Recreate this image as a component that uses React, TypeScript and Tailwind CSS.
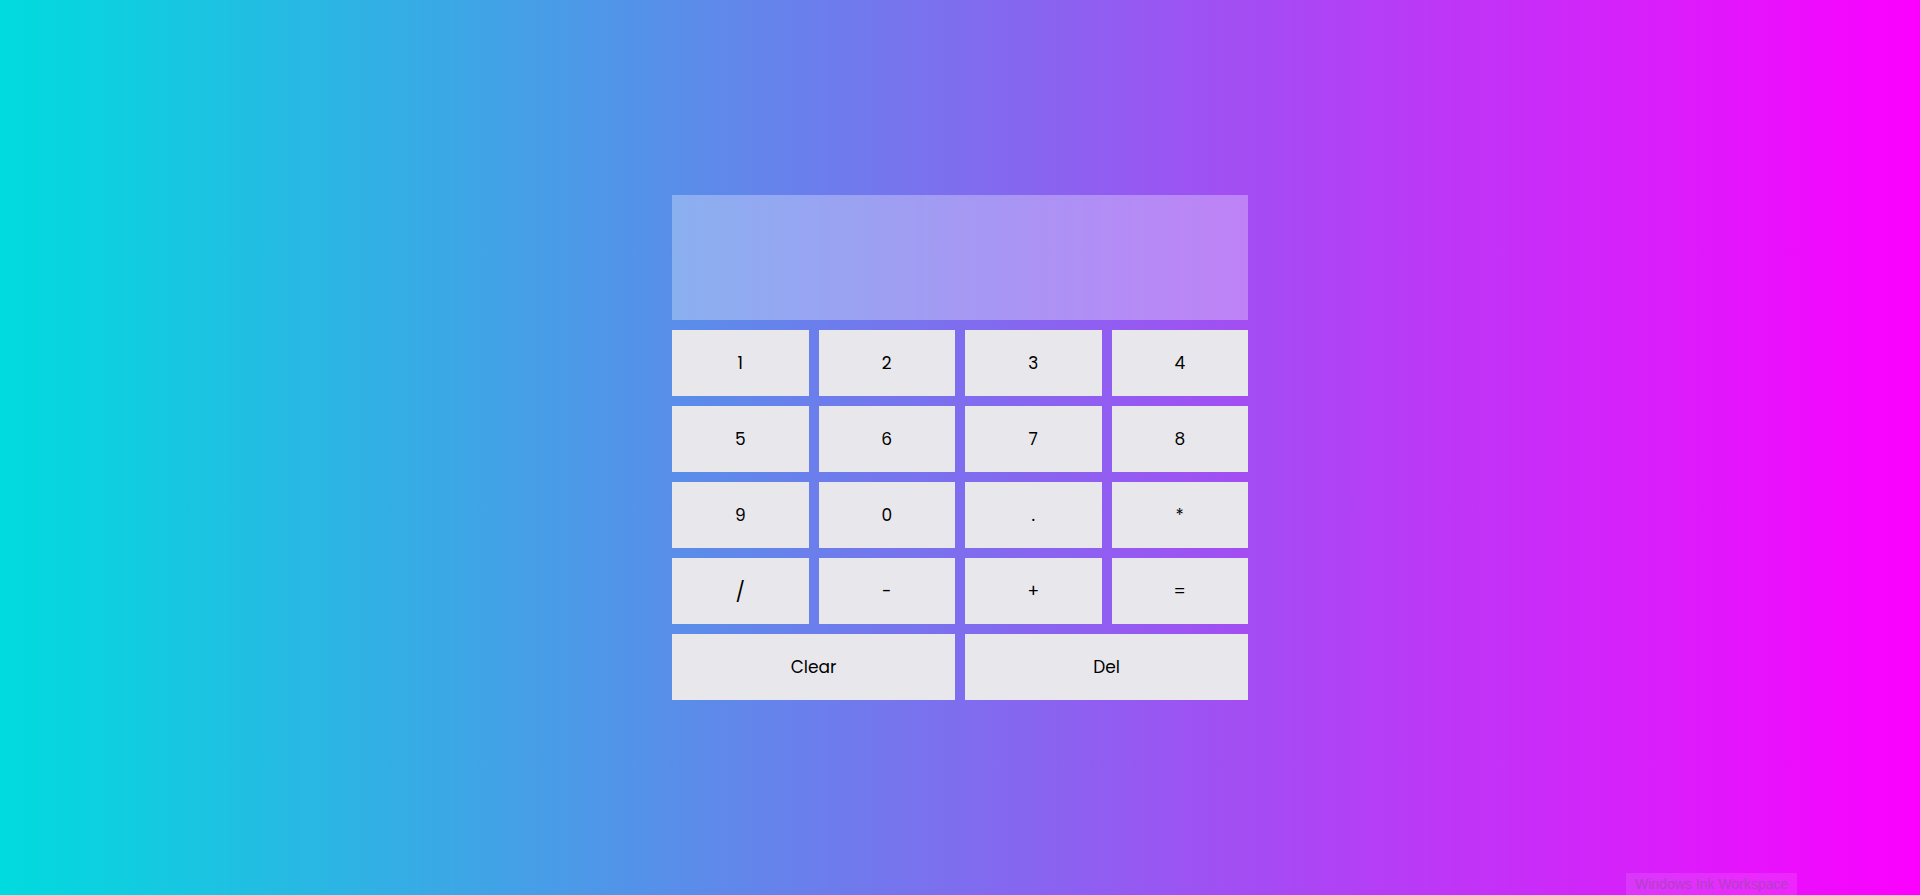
import { useState } from "react";

const keys = ["1", "2", "3", "4", "5", "6", "7", "8", "9", "0", ".", "*", "/", "-", "+", "="];

export default function App() {
	const [value, setValue] = useState("");

	const press = (key: string) => {
		if (key === "=") {
			try {
				// eslint-disable-next-line no-new-func
				setValue(String(Function(`return (${value})`)()));
			} catch {
				setValue("Error");
			}
			return;
		}
		setValue((v) => v + key);
	};

	return (
		<div className="relative flex h-[895px] w-full items-center justify-center overflow-hidden bg-[linear-gradient(to_right,#00dbde,#fc00ff)] font-['Poppins','Inter','Noto_Sans',sans-serif]">
			<div className="flex w-[576px] flex-col gap-[10px]">
				{/* Display */}
				<input
					readOnly
					value={value}
					className="h-[125px] w-full bg-white/30 px-5 text-right text-4xl text-[#222] outline-none"
				/>

				{/* Keys */}
				<div className="grid grid-cols-4 gap-[10px]">
					{keys.map((k) => (
						<button
							key={k}
							onClick={() => press(k)}
							className={`h-[66px] cursor-pointer bg-[#e8e8ec] pt-px text-black ${
								k === "/" ? "text-[20px]" : "text-[17px]"
							}`}
						>
							{k}
						</button>
					))}
					<button
						onClick={() => setValue("")}
						className="col-span-2 h-[66px] cursor-pointer bg-[#e8e8ec] pt-px text-[17px] text-black"
					>
						Clear
					</button>
					<button
						onClick={() => setValue((v) => v.slice(0, -1))}
						className="col-span-2 h-[66px] cursor-pointer bg-[#e8e8ec] pt-px text-[17px] text-black"
					>
						Del
					</button>
				</div>
			</div>

			{/* system tooltip left in the screenshot */}
			<div className="absolute bottom-0 left-[1626px] flex h-[22px] w-[171px] items-center justify-center bg-white/10 font-['Liberation_Sans',sans-serif] text-[14px] text-[#b040c8]">
				Windows Ink Workspace
			</div>
		</div>
	);
}
